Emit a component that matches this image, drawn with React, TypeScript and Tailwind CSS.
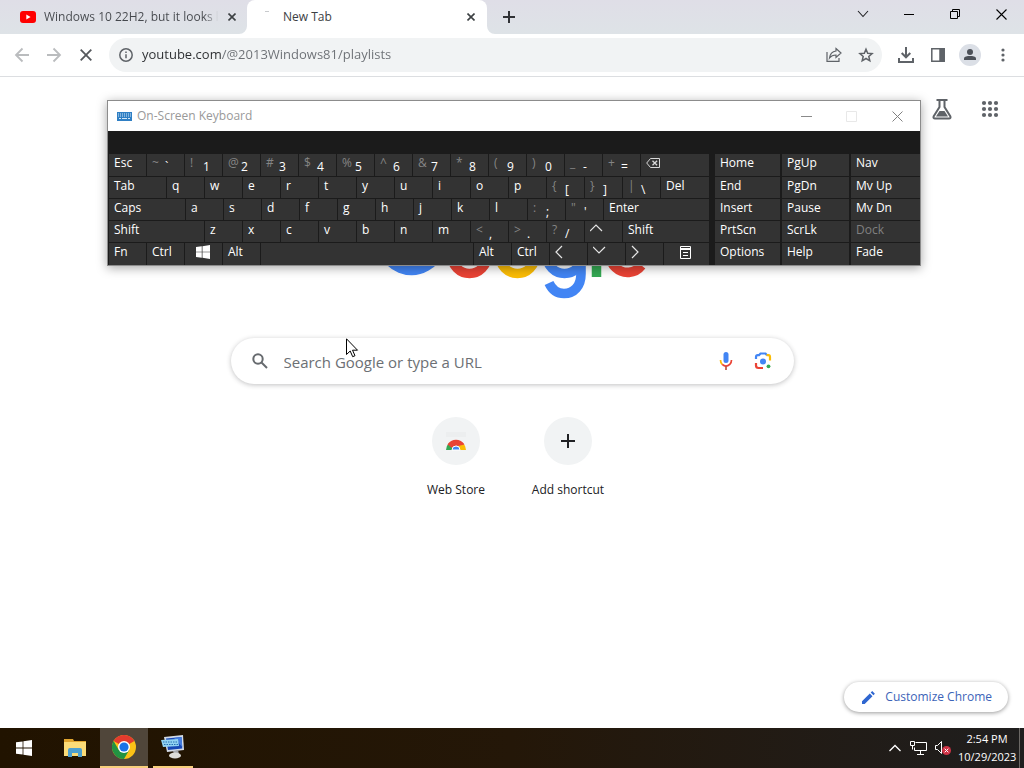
import React, { useState } from 'react';

type KeyDef = {
  label?: string;
  shift?: string;
  icon?: React.ReactNode;
  name?: string;
  width?: string;
};

const KEY = 'w-[37px]';

const Chevron = ({ d }: { d: string }) => (
  <svg width="14" height="14" viewBox="0 0 14 14" fill="none" stroke="#e6e6e6" strokeWidth="1.2">
    <path d={d} />
  </svg>
);

const WindowsLogo = ({ size }: { size: number }) => (
  <svg width={size} height={size} viewBox="0 0 16 16" fill="#fff">
    <path d="M0 2.3 6.6 1.4V7.6H0zM7.4 1.3 16 0v7.6H7.4zM0 8.4h6.6v6.2L0 13.7zM7.4 8.4H16V16l-8.6-1.3z" />
  </svg>
);

const BackspaceIcon = () => (
  <svg width="14" height="14" viewBox="0 -1 14 14" fill="none" stroke="#d8d8d8">
    <path d="M4.5 1.5h9v9h-9L.7 6z" />
    <path d="m6.5 3.7 4.6 4.6m0-4.6L6.5 8.3" strokeWidth="1.3" />
  </svg>
);

const MenuIcon = () => (
  <svg width="11" height="13" viewBox="0 0 11 13" fill="none" stroke="#fff">
    <path d="M.5.5h10v12H.5zM.5 2.5h10M.5 3.5h10M3 6.5h5M3 9.5h5" />
  </svg>
);

const ROWS: KeyDef[][] = [
  [
    { label: 'Esc' },
    { label: '`', shift: '~' },
    { label: '1', shift: '!' },
    { label: '2', shift: '@' },
    { label: '3', shift: '#' },
    { label: '4', shift: '$' },
    { label: '5', shift: '%' },
    { label: '6', shift: '^' },
    { label: '7', shift: '&' },
    { label: '8', shift: '*' },
    { label: '9', shift: '(' },
    { label: '0', shift: ')' },
    { label: '-', shift: '_' },
    { label: '=', shift: '+' },
    { icon: <BackspaceIcon />, name: 'Backspace', width: 'flex-1' },
  ],
  [
    { label: 'Tab', width: 'w-[57px]' },
    ...'qwertyuiop'.split('').map((label) => ({ label })),
    { label: '[', shift: '{' },
    { label: ']', shift: '}' },
    { label: '\\', shift: '|' },
    { label: 'Del', width: 'flex-1' },
  ],
  [
    { label: 'Caps', width: 'w-[76px]' },
    ...'asdfghjkl'.split('').map((label) => ({ label })),
    { label: ';', shift: ':' },
    { label: "'", shift: '"' },
    { label: 'Enter', width: 'flex-1' },
  ],
  [
    { label: 'Shift', width: 'w-[95px]' },
    ...'zxcvbnm'.split('').map((label) => ({ label })),
    { label: ',', shift: '<' },
    { label: '.', shift: '>' },
    { label: '/', shift: '?' },
    { icon: <Chevron d="M0 8l6-6 6 6" />, name: 'Up' },
    { label: 'Shift', width: 'flex-1' },
  ],
  [
    { label: 'Fn' },
    { label: 'Ctrl' },
    { icon: <span className="block pl-[6px]"><WindowsLogo size={14} /></span>, name: 'Windows' },
    { label: 'Alt' },
    { name: 'Space', width: 'flex-1' },
    { label: 'Alt' },
    { label: 'Ctrl' },
    { icon: <Chevron d="M7 1 1 7l6 6" />, name: 'Left' },
    { icon: <Chevron d="m0 2 6 6 6-6" />, name: 'Down' },
    { icon: <Chevron d="m1 1 6 6-6 6" />, name: 'Right' },
    { icon: <span className="block pt-px pl-[11px]"><MenuIcon /></span>, name: 'Menu', width: 'w-[45px]' },
  ],
];

const SIDE_KEYS = [
  ['Home', 'PgUp', 'Nav'],
  ['End', 'PgDn', 'Mv Up'],
  ['Insert', 'Pause', 'Mv Dn'],
  ['PrtScn', 'ScrLk', 'Dock'],
  ['Options', 'Help', 'Fade'],
];

function Key({ label, shift, icon, name, width = KEY }: KeyDef) {
  return (
    <button
      type="button"
      aria-label={name}
      className={`${width} flex items-start overflow-hidden bg-[#333333] pl-[5px] text-left text-[12px] leading-[18px] text-white`}
    >
      {shift ? (
        <>
          <span className="w-[13px] text-[#858585]">{shift}</span>
          <span className="pt-[4px]">{label}</span>
        </>
      ) : (
        label
      )}
      {icon && <span className="pt-[2px]">{icon}</span>}
    </button>
  );
}

function OnScreenKeyboard() {
  return (
    <section
      aria-label="On-Screen Keyboard"
      className="absolute top-[100px] left-[107px] w-[814px] border border-[#8c8c8c] bg-[#1b1b1b] shadow-[0_2px_10px_rgba(0,0,0,0.35)]"
    >
      <header className="flex h-[30px] items-center bg-white pl-[9px]">
        <svg width="15" height="9" viewBox="0 0 15 9">
          <rect width="15" height="9" fill="#2f7fc4" />
          <path d="M1 2h13M1 4h13" stroke="#d5e8f7" strokeDasharray="1 1" />
          <path d="M2 6.5h2m1 0h5m1 0h2" stroke="#d5e8f7" />
        </svg>
        <h2 className="flex-1 pl-[5px] text-[12px] text-[#999999]">On-Screen Keyboard</h2>
        <button type="button" aria-label="Minimize keyboard" className="flex w-[45px] justify-center">
          <svg width="11" height="11" stroke="#8a8a8a"><path d="M0 5.5h11" /></svg>
        </button>
        <button type="button" aria-label="Maximize keyboard" disabled className="flex w-[45px] justify-center">
          <svg width="11" height="11" fill="none" stroke="#e8e8e8"><path d="M.5.5h10v10H.5z" /></svg>
        </button>
        <button type="button" aria-label="Close keyboard" className="flex w-[46px] justify-center">
          <svg width="11" height="11" stroke="#808080"><path d="m.5.5 10 10m0-10-10 10" /></svg>
        </button>
      </header>
      <div className="flex gap-[6px] pt-[23px]">
        <div className="grid flex-1 grid-rows-[22px_21px_21px_21px_22px] gap-px pl-px">
          {ROWS.map((row, i) => (
            <div key={i} className="flex gap-px">
              {row.map((k, j) => (
                <Key key={j} {...k} />
              ))}
            </div>
          ))}
        </div>
        <div className="grid w-[205px] grid-cols-[65px_67px_1fr] grid-rows-[22px_21px_21px_21px_22px] gap-x-[2px] gap-y-px">
          {SIDE_KEYS.flat().map((label) => (
            <button
              key={label}
              type="button"
              disabled={label === 'Dock'}
              className="flex items-start bg-[#333333] pl-[5px] text-left text-[12px] leading-[18px] text-white disabled:text-[#808080]"
            >
              {label}
            </button>
          ))}
        </div>
      </div>
    </section>
  );
}

function TabStrip() {
  return (
    <div className="flex h-[34px] bg-linear-to-b from-[#dfdee7] to-[#dee3e7]">
      <div className="flex w-[247px] items-center pl-[20px]">
        <svg width="16" height="12" viewBox="0 0 16 12">
          <rect width="16" height="12" rx="3" fill="#f00" />
          <path d="m6.3 3.4 4.3 2.6-4.3 2.6z" fill="#fff" />
        </svg>
        <span className="ml-[8px] w-[178px] bg-linear-to-r from-[#45484d] from-90% to-transparent to-98% bg-clip-text text-[12px] whitespace-nowrap text-transparent">
          Windows 10 22H2, but it looks l
        </span>
        <button type="button" aria-label="Close tab" className="ml-[6px]">
          <svg width="8" height="8" stroke="#3c4043" strokeWidth="1.6"><path d="m.5.5 7 7m0-7-7 7" /></svg>
        </button>
      </div>
      <div className="relative flex w-[240px] items-center rounded-t-[8px] bg-white pr-[12px] pl-[18px]">
        <svg className="absolute bottom-0 -left-[8px]" width="8" height="8"><path d="M8 0v8H0a8 8 0 0 0 8-8" fill="#fff" /></svg>
        <svg className="absolute -right-[8px] bottom-0" width="8" height="8"><path d="M0 0v8h8a8 8 0 0 1-8-8" fill="#fff" /></svg>
        <svg width="4" height="16" stroke="#c8cacd"><path d="M0 2.5h4" /></svg>
        <span className="flex-1 pl-[14px] text-[12px] text-[#3c4043]">New Tab</span>
        <button type="button" aria-label="Close tab">
          <svg width="8" height="8" stroke="#3c4043" strokeWidth="1.6"><path d="m.5.5 7 7m0-7-7 7" /></svg>
        </button>
      </div>
      <button type="button" aria-label="New tab" className="flex w-[44px] items-center justify-center">
        <svg width="12" height="12" stroke="#303236" strokeWidth="2"><path d="M6 0v12M0 6h12" /></svg>
      </button>
      <div className="ml-auto flex items-center pb-[6px]">
        <button type="button" aria-label="Search tabs" className="flex w-[46px] justify-center">
          <svg width="12" height="8" fill="none" stroke="#202124" strokeWidth="1.1"><path d="m1 1 5 5.5L11 1" /></svg>
        </button>
        <button type="button" aria-label="Minimize" className="flex w-[46px] justify-center">
          <svg width="10" height="10" stroke="#000"><path d="M0 5.5h10" /></svg>
        </button>
        <button type="button" aria-label="Restore" className="flex w-[46px] justify-center">
          <svg width="10" height="10" fill="none" stroke="#000"><path d="M.5 2.5h7v7h-7zM2.5 2.5v-2h7v7h-2" /></svg>
        </button>
        <button type="button" aria-label="Close" className="flex w-[46px] justify-center">
          <svg width="11" height="11" stroke="#000" strokeWidth="1.1"><path d="m.5.5 10 10m0-10-10 10" /></svg>
        </button>
      </div>
    </div>
  );
}

function Toolbar() {
  const [url, setUrl] = useState('youtube.com/@2013Windows81/playlists');

  return (
    <div className="flex h-[43px] items-center border-b border-[#dcdee1] bg-white pl-[14px]">
      <button type="button" aria-label="Back">
        <svg width="16" height="16" fill="none" stroke="#babcbe" strokeWidth="1.8"><path d="M15 8H2m6.5-6.5L2 8l6.5 6.5" /></svg>
      </button>
      <button type="button" aria-label="Forward" className="ml-[16px]">
        <svg width="16" height="16" fill="none" stroke="#babcbe" strokeWidth="1.8"><path d="M1 8h13M7.5 1.5 14 8l-6.5 6.5" /></svg>
      </button>
      <button type="button" aria-label="Stop" className="ml-[18px]">
        <svg width="12" height="12" stroke="#55585c" strokeWidth="1.8"><path d="m.7.7 10.6 10.6m0-10.6L.7 11.3" /></svg>
      </button>
      <div className="ml-[17px] flex h-[34px] flex-1 items-center rounded-full bg-[#f1f3f4] pr-[8px] pl-[10px]">
        <button type="button" aria-label="View site information">
          <svg width="14" height="14" fill="none" stroke="#5f6368" strokeWidth="1.5">
            <circle cx="7" cy="7" r="6.2" />
            <path d="M7 6.3v4M7 3.5V5" />
          </svg>
        </button>
        <input
          aria-label="Address and search bar"
          value={url}
          onChange={(e) => setUrl(e.target.value)}
          className="ml-[9px] min-w-0 flex-1 bg-linear-to-r from-[#2b2d30] from-[79px] to-[#6b6f74] to-[79px] bg-clip-text text-[13px] text-transparent outline-none"
        />
        <button type="button" aria-label="Share">
          <svg width="16" height="16" fill="none" stroke="#5f6368" strokeWidth="1.2">
            <path d="M1 5v9.4h12V11" />
            <path d="M10 1.5 15 6l-5 4.500V8C7 8 5 9 3.500 11 4 7 6.500 4.500 10 4z" />
          </svg>
        </button>
        <button type="button" aria-label="Bookmark this tab" className="ml-[16px]">
          <svg width="16" height="16" viewBox="0 0 16 16" fill="none" stroke="#5f6368" strokeWidth="1.5">
            <path d="m8 2.200 1.700 4 4.400.4-3.300 2.900 1 4.300L8 11.500l-3.800 2.300 1-4.300-3.300-2.900 4.400-.4z" />
          </svg>
        </button>
      </div>
      <button type="button" aria-label="Downloads" className="ml-[16px]">
        <svg width="16" height="16" fill="none" stroke="#5f6368" strokeWidth="2">
          <path d="M8 0v10M3.7 6 8 10.3 12.3 6M1 11v4h14v-4" />
        </svg>
      </button>
      <button type="button" aria-label="Side panel" className="ml-[17px]">
        <svg width="14" height="14" fill="none" stroke="#5f6368" strokeWidth="1.5">
          <path d="M.8.8h12.400v12.400H.8z" />
          <path d="M9 1h4v12H9z" fill="#5f6368" />
        </svg>
      </button>
      <button type="button" aria-label="Profile" className="ml-[14px]">
        <svg width="22" height="22" fill="#4b5058">
          <circle cx="11" cy="11" r="11" fill="#dbdfe6" />
          <circle cx="11" cy="8" r="3" />
          <path d="M5 16v-1.500C5 12.500 8.500 12 11 12s6 .5 6 2.500V16z" />
        </svg>
      </button>
      <button type="button" aria-label="Menu" className="mr-[13px] ml-[14px]">
        <svg width="16" height="14" fill="#5f6368">
          <circle cx="8" cy="2" r="1.6" />
          <circle cx="8" cy="7" r="1.6" />
          <circle cx="8" cy="12" r="1.6" />
        </svg>
      </button>
    </div>
  );
}

const GoogleLogo = () => (
  <svg role="img" aria-label="Google" width="272" height="92" viewBox="0 0 272 92" fill="none" strokeWidth="9.6">
    <path d="M58 12A29.800 29.800 0 1 0 65 36H36" stroke="#4285f4" />
    <circle cx="93.5" cy="47" r="17.5" stroke="#ea4335" />
    <circle cx="141.5" cy="47" r="17.5" stroke="#fbbc05" />
    <circle cx="188.5" cy="47" r="17.5" stroke="#4285f4" />
    <path d="M205 26v39c0 12-7 19.500-17 19.500-8 0-12.500-5-15-10.500" stroke="#4285f4" />
    <path d="M220.500 3v65" stroke="#34a853" strokeWidth="9.5" />
    <path d="m232 50 34-14a17.500 17.500 0 1 0-.5 20.500" stroke="#ea4335" />
  </svg>
);

function NewTabPage() {
  return (
    <main className="flex flex-1 flex-col items-center bg-white">
      <div className="flex h-[64px] items-center gap-[29px] self-end pr-[25px]">
        <button type="button" aria-label="Search Labs">
          <svg width="20" height="22" viewBox="0 0 20 22" fill="none" stroke="#5f6368" strokeWidth="2">
            <path d="M4.500 2h11M7.500 2v7L1.600 18.500Q1 20.500 3 20.500h14q2 0 1.400-2L12.500 9V2" />
            <path d="M4 18.500 7.500 13h5l3.500 5.500z" fill="#5f6368" stroke="none" />
          </svg>
        </button>
        <button type="button" aria-label="Google apps">
          <svg width="18" height="18" fill="#5f6368">
            {[3, 9, 15].map((y) => [3, 9, 15].map((x) => <circle key={`${x}-${y}`} cx={x} cy={y} r="2.1" />))}
          </svg>
        </button>
      </div>
      <div className="mt-[68px]">
        <GoogleLogo />
      </div>
      <label className="mt-[37px] flex h-[46px] w-[563px] max-w-full items-center rounded-full bg-white pr-[22px] pl-[21px] shadow-[0_1px_5px_rgba(32,33,36,0.28)]">
        <svg width="16" height="16" fill="none" stroke="#666a6e" strokeWidth="2">
          <circle cx="6" cy="6" r="4.7" />
          <path d="m9.500 9.500 5.500 5.500" />
        </svg>
        <input
          aria-label="Search Google or type a URL"
          placeholder="Search Google or type a URL"
          className="ml-[16px] min-w-0 flex-1 pt-[2px] text-[15px] text-[#202124] outline-none placeholder:text-[#6c7074]"
        />
        <button type="button" aria-label="Search by voice">
          <svg width="14" height="18" viewBox="0 0 14 18" fill="none" strokeWidth="1.7">
            <rect x="4.5" y="0" width="5" height="11" rx="2.5" fill="#4285f4" />
            <path d="M1.500 8c0 2 .7 3.400 1.700 4.300" stroke="#fbbc05" />
            <path d="M3.200 12.300c2.300 2.100 5.300 2.100 7.600 0 1-.9 1.700-2.300 1.700-4.300" stroke="#ea4335" />
            <path d="M7 14v4" stroke="#c0563f" />
          </svg>
        </button>
        <button type="button" aria-label="Search by image" className="ml-[21px]">
          <svg width="18" height="18" viewBox="0 0 18 18" fill="none" strokeWidth="2.2">
            <path d="M2 7V5q0-1.800 1.800-1.800H5L6.500 1.500h5L13 3.200" stroke="#4285f4" />
            <path d="M12.500 3.200h2Q16 3.200 16 5v3.500" stroke="#fbbc05" />
            <path d="M2 11v2.500Q2 16 4.500 16H9" stroke="#ea4335" />
            <circle cx="9" cy="9.500" r="3" fill="#4285f4" />
            <circle cx="14.500" cy="14.300" r="1.900" fill="#34a853" />
          </svg>
        </button>
      </label>
      <nav className="mt-[33px] flex text-[12px] text-[#202124]">
        <a href="#web-store" className="flex w-[112px] flex-col items-center gap-[16px]">
          <span className="flex size-[48px] items-center justify-center rounded-full bg-[#f1f3f4]">
            <svg width="24" height="24" viewBox="0 0 24 24">
              <path d="M2 3h20v5H2z" fill="#eceeef" />
              <path d="M2 21a10 10 0 0 1 3-7l4 4q-1 1-1 3z" fill="#34a853" />
              <path d="M13 14h6q3 3 3 7h-6z" fill="#fbbc05" />
              <path d="M3.500 15.500A10 10 0 0 1 20.500 15.500L14 17q-3-1-6 2z" fill="#ea4335" />
              <path d="M8 21a4 4 0 0 1 8 0z" fill="#4285f4" stroke="#fff" />
            </svg>
          </span>
          Web Store
        </a>
        <button type="button" className="flex w-[112px] flex-col items-center gap-[16px]">
          <span className="flex size-[48px] items-center justify-center rounded-full bg-[#f1f3f4]">
            <svg width="14" height="14" stroke="#202124" strokeWidth="2"><path d="M7 0v14M0 7h14" /></svg>
          </span>
          Add shortcut
        </button>
      </nav>
      <button
        type="button"
        className="mt-auto mr-[16px] mb-[16px] flex h-[30px] items-center self-end rounded-full bg-white pr-[16px] pl-[18px] text-[12px] text-[#3c64b8] shadow-[0_1px_4px_rgba(0,0,0,0.4)]"
      >
        <svg width="13" height="13" fill="#2f66d0">
          <path d="M0 10.300 7.800 2.500l2.700 2.700L2.700 13H0zM8.700 1.600 10.200.1 12.900 2.800 11.400 4.300z" />
        </svg>
        <span className="pl-[10px]">Customize Chrome</span>
      </button>
    </main>
  );
}

function Taskbar() {
  return (
    <footer className="flex h-[40px] bg-linear-to-r from-[#211300] via-[#241708] to-[#1f1e1e] text-white">
      <button type="button" aria-label="Start" className="flex w-[48px] items-center justify-center">
        <WindowsLogo size={16} />
      </button>
      <button type="button" aria-label="File Explorer" className="ml-[2px] flex w-[50px] items-center justify-center">
        <svg width="22" height="20" viewBox="0 0 22 20">
          <path d="M0 1h9l1 2h12v15H0z" fill="#e0a52f" />
          <path d="M0 4h22v14H0z" fill="#fbdc78" />
          <path d="M4 19v-7q0-2 2-2h10q2 0 2 2v7h-4v-4H8v4z" fill="#4da0cf" />
        </svg>
      </button>
      <button type="button" aria-label="Google Chrome" className="flex w-[48px] items-center justify-center border-b-2 border-[#f7cf7c] bg-[#50463a]">
        <svg width="24" height="24" viewBox="0 0 24 24">
          <circle cx="12" cy="12" r="12" fill="#fbc116" />
          <path d="M12 12 1.600 6A12 12 0 0 1 22.400 6z" fill="#e33b2e" />
          <path d="M1.600 6A12 12 0 0 0 12 24l5.200-9L12 12 6.800 15z" fill="#229342" />
          <circle cx="12" cy="12" r="6" fill="#fff" />
          <circle cx="12" cy="12" r="4.6" fill="#1a73e8" />
        </svg>
      </button>
      <button type="button" aria-label="On-Screen Keyboard" className="ml-[5px] flex w-[40px] items-center justify-center border-b-2 border-[#f7cf7c]">
        <svg width="24" height="24" viewBox="0 0 24 24">
          <path d="M3 2 22 0l1 15-17 2z" fill="#d3dbe8" />
          <path d="m5 3.500 15.500-1.500.8 11.500L7 15z" fill="#1747b5" />
          <path d="m13 3 7.500-1 .8 10z" fill="#447de0" />
          <path d="m0 5 17-1 1 7-16 1z" fill="#91d1f2" />
          <path d="M2 7h14M3 9.500h14" stroke="#246fb4" strokeDasharray="1.5 1" />
          <path d="m12 16 5-1 1 4h-5z" fill="#a7a9ad" />
          <ellipse cx="14" cy="20.500" rx="6" ry="3" fill="#dcdcd9" />
        </svg>
      </button>
      <div className="ml-auto flex items-center">
        <button type="button" aria-label="Show hidden icons">
          <svg width="14" height="10" fill="none" stroke="#fff" strokeWidth="1.3"><path d="m1.500 8 5.500-5.500L12.500 8" /></svg>
        </button>
        <button type="button" aria-label="Network" className="ml-[8px]">
          <svg width="17" height="14" fill="none" stroke="#fff">
            <path d="M5.500 1.500h11v8H4.500V6.500M10.500 9.500v4M7 13.500h7M.5.500h4v4h-4zM2.500 4.500v4" />
          </svg>
        </button>
        <button type="button" aria-label="Volume" className="ml-[8px]">
          <svg width="16" height="14" viewBox="0 0 16 14" fill="none" stroke="#fff">
            <path d="M.5 4.500h2l4-4v12l-4-4h-2z" />
            <circle cx="11.500" cy="9.500" r="4.500" fill="#cf3346" stroke="none" />
            <path d="m9.700 7.700 3.600 3.600m0-3.600-3.600 3.600" />
          </svg>
        </button>
        <button type="button" className="ml-[7px] w-[58px] text-center text-[11px] leading-[18px] whitespace-nowrap">
          2:54 PM
          <br />
          10/29/2023
        </button>
        <button type="button" aria-label="Show desktop" className="ml-[3px] h-[40px] w-[5px] border-l border-[#6b6865]" />
      </div>
    </footer>
  );
}

export default function App() {
  return (
    <div className="relative flex min-h-screen flex-col overflow-hidden bg-white font-['Open_Sans','Noto_Sans',sans-serif]">
      <TabStrip />
      <Toolbar />
      <NewTabPage />
      <Taskbar />
      <OnScreenKeyboard />
      <svg className="pointer-events-none absolute top-[338px] left-[346px]" width="13" height="20" fill="#fff" stroke="#000">
        <path d="M.5.800v15.700l3.700-3.500 2.500 5.700 2.300-1-2.500-5.500h5z" />
      </svg>
    </div>
  );
}
